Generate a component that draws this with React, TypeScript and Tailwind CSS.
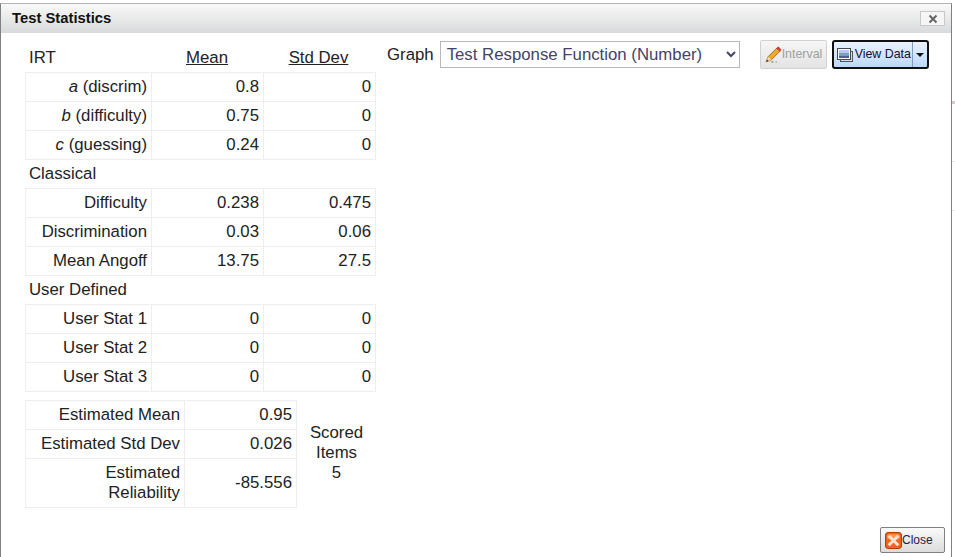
import React from "react";

type Row = { label: React.ReactNode; mean: string; std: string };

const irtRows: Row[] = [
  { label: <><i>a</i> (discrim)</>, mean: "0.8", std: "0" },
  { label: <><i>b</i> (difficulty)</>, mean: "0.75", std: "0" },
  { label: <><i>c</i> (guessing)</>, mean: "0.24", std: "0" },
];

const classicalRows: Row[] = [
  { label: "Difficulty", mean: "0.238", std: "0.475" },
  { label: "Discrimination", mean: "0.03", std: "0.06" },
  { label: "Mean Angoff", mean: "13.75", std: "27.5" },
];

const userRows: Row[] = [
  { label: "User Stat 1", mean: "0", std: "0" },
  { label: "User Stat 2", mean: "0", std: "0" },
  { label: "User Stat 3", mean: "0", std: "0" },
];

const cell = "border border-[#eeeeee] px-[4px] text-right h-[29px] p-0";

function StatTable({ rows }: { rows: Row[] }) {
  return (
    <table className="border-collapse table-fixed w-[350px]">
      <colgroup>
        <col className="w-[126px]" />
        <col className="w-[112px]" />
        <col className="w-[112px]" />
      </colgroup>
      <tbody>
        {rows.map((r, i) => (
          <tr key={i}>
            <td className={cell}>{r.label}</td>
            <td className={cell}>{r.mean}</td>
            <td className={cell}>{r.std}</td>
          </tr>
        ))}
      </tbody>
    </table>
  );
}

function SectionLabel({ children }: { children: React.ReactNode }) {
  return <div className="h-[28px] pl-[4px] leading-[28px]">{children}</div>;
}

function PencilIcon() {
  return (
    <svg width="17" height="17" viewBox="0 0 16 16" className="shrink-0">
      <path d="M1 15 L3 10 L11 2 L14 5 L6 13 Z" fill="#f0a830" stroke="#9a5a10" strokeWidth="0.8" />
      <path d="M11 2 L12.5 0.8 L15 3.3 L14 5 Z" fill="#d9403a" stroke="#9c2a25" strokeWidth="0.6" />
      <path d="M1 15 L3 10 L6 13 Z" fill="#f4dcb0" />
      <path d="M1 15 L2 12.6 L3.4 14 Z" fill="#333333" />
      <path d="M6 15 H8 M10 15 H11" stroke="#555555" strokeWidth="0.8" />
    </svg>
  );
}

function WindowIcon() {
  return (
    <svg width="16" height="16" viewBox="0 0 16 16" className="shrink-0">
      <rect x="3.5" y="4.5" width="12" height="10" fill="#d8dde4" stroke="#555555" />
      <rect x="0.5" y="1.5" width="13" height="11" fill="#ffffff" stroke="#44484f" />
      <rect x="2" y="3" width="10" height="8" fill="#7b9bd0" />
      <rect x="2" y="3" width="10" height="3" fill="#b9cbe8" />
      <rect x="2" y="9" width="10" height="2" fill="#46639c" />
    </svg>
  );
}

function CloseIcon() {
  return (
    <svg width="17" height="17" viewBox="0 0 16 16" className="shrink-0">
      <rect x="0.5" y="0.5" width="15" height="15" rx="3" fill="#f2661c" stroke="#b53c08" />
      <rect x="2" y="2" width="12" height="5" rx="2" fill="#f79a55" />
      <path d="M4.5 4.5 L11.5 11.5 M11.5 4.5 L4.5 11.5" stroke="#fbe3d2" strokeWidth="2.8" strokeLinecap="square" />
    </svg>
  );
}

export default function App() {
  return (
    <div className="relative h-[557px] w-[955px] overflow-hidden bg-white pt-[3px] font-['Liberation_Sans',Arial,sans-serif] text-[16.8px] text-[#222222]">
      {/* bits of the page behind the dialog */}
      <div className="absolute left-[952px] top-[101px] h-[3px] w-[3px] bg-[#e6c4c4]" />
      <div className="absolute left-[952px] top-[161px] h-px w-[3px] bg-[#e8e8e8]" />
      <div className="absolute left-[952px] top-[210px] h-px w-[3px] bg-[#e8e8e8]" />

      <div className="flex h-[560px] w-[952px] flex-col border-x border-t border-x-[#808080] border-t-[#b4b4b4] bg-white">
        <div className="flex h-[29px] shrink-0 items-center justify-between bg-gradient-to-b from-[#f9f9f9] to-[#d9dadb] pl-[11px] pr-[6px]">
          <span className="text-[14.8px] font-bold text-[#111111]">Test Statistics</span>
          <button className="flex h-[15px] w-[25px] items-center justify-center border border-[#c8c8c8] bg-[#f6f6f6]">
            <svg width="10" height="10" viewBox="0 0 10 10">
              <path d="M1.5 1.5 L8.5 8.5 M8.5 1.5 L1.5 8.5" stroke="#666666" strokeWidth="2" />
            </svg>
          </button>
        </div>

        <div className="flex flex-1 pl-[24px]">
          <div className="w-[351px] shrink-0">
            <div className="flex h-[39px] items-end pb-[2px]">
              <span className="w-[126px] pl-[4px]">IRT</span>
              <span className="w-[112px] text-center underline">Mean</span>
              <span className="w-[111px] text-center underline">Std Dev</span>
            </div>
            <StatTable rows={irtRows} />
            <SectionLabel>Classical</SectionLabel>
            <StatTable rows={classicalRows} />
            <SectionLabel>User Defined</SectionLabel>
            <StatTable rows={userRows} />

            <div className="mt-[8px] flex">
              <table className="w-[271px] table-fixed border-collapse">
                <colgroup>
                  <col className="w-[159px]" />
                  <col className="w-[112px]" />
                </colgroup>
                <tbody>
                  <tr>
                    <td className={cell}>Estimated Mean</td>
                    <td className={cell}>0.95</td>
                  </tr>
                  <tr>
                    <td className={cell}>Estimated Std Dev</td>
                    <td className={cell}>0.026</td>
                  </tr>
                  <tr>
                    <td className="h-[49px] border border-[#eeeeee] px-[4px] text-right leading-[20px]">
                      Estimated
                      <br />
                      Reliability
                    </td>
                    <td className={cell}>-85.556</td>
                  </tr>
                </tbody>
              </table>
              <div className="w-[79px] pt-[23px] text-center leading-[20px]">
                Scored
                <br />
                Items
                <br />5
              </div>
            </div>
          </div>

          <div className="flex h-fit items-center pl-[11px] pt-[7px]">
            <span className="mr-[6px] pt-[1px]">Graph</span>
            <select className="h-[27px] w-[300px] border border-[#b8b8b8] bg-white pl-[2px] text-[16.8px] text-[#444466]">
              <option>Test Response Function (Number)</option>
            </select>
            <button className="ml-[20px] flex h-[29px] w-[67px] items-center rounded-[2px] border border-[#d2d2d2] bg-gradient-to-b from-[#f6f6f6] to-[#e4e4e4] pl-[4px] text-[12.4px] text-[#a0a0a0]">
              <PencilIcon />
              <span>Interval</span>
            </button>
            <div className="ml-[5px] flex h-[29px] w-[97px] items-center rounded-[3px] border-2 border-[#111111] bg-gradient-to-b from-[#eaf3fe] to-[#bcd8fb] text-[12.4px] text-[#111133]">
              <span className="flex h-full flex-1 items-center gap-[2px] pl-[3px]">
                <WindowIcon />
                <span>View Data</span>
              </span>
              <span className="flex h-full w-[15px] items-center justify-center border-l border-[#7f9fc8]">
                <svg width="8" height="4" viewBox="0 0 8 4">
                  <path d="M0 0 H8 L4 4 Z" fill="#111111" />
                </svg>
              </span>
            </div>
          </div>
        </div>

        <div className="flex h-[36px] shrink-0 justify-end pr-[6px]">
          <button className="flex h-[26px] w-[65px] items-center rounded-[2px] border border-[#808080] bg-gradient-to-b from-[#fafafa] to-[#dcdcdc] pl-[4px] text-[12px] text-[#222244]">
            <CloseIcon />
            <span>Close</span>
          </button>
        </div>
      </div>
    </div>
  );
}
